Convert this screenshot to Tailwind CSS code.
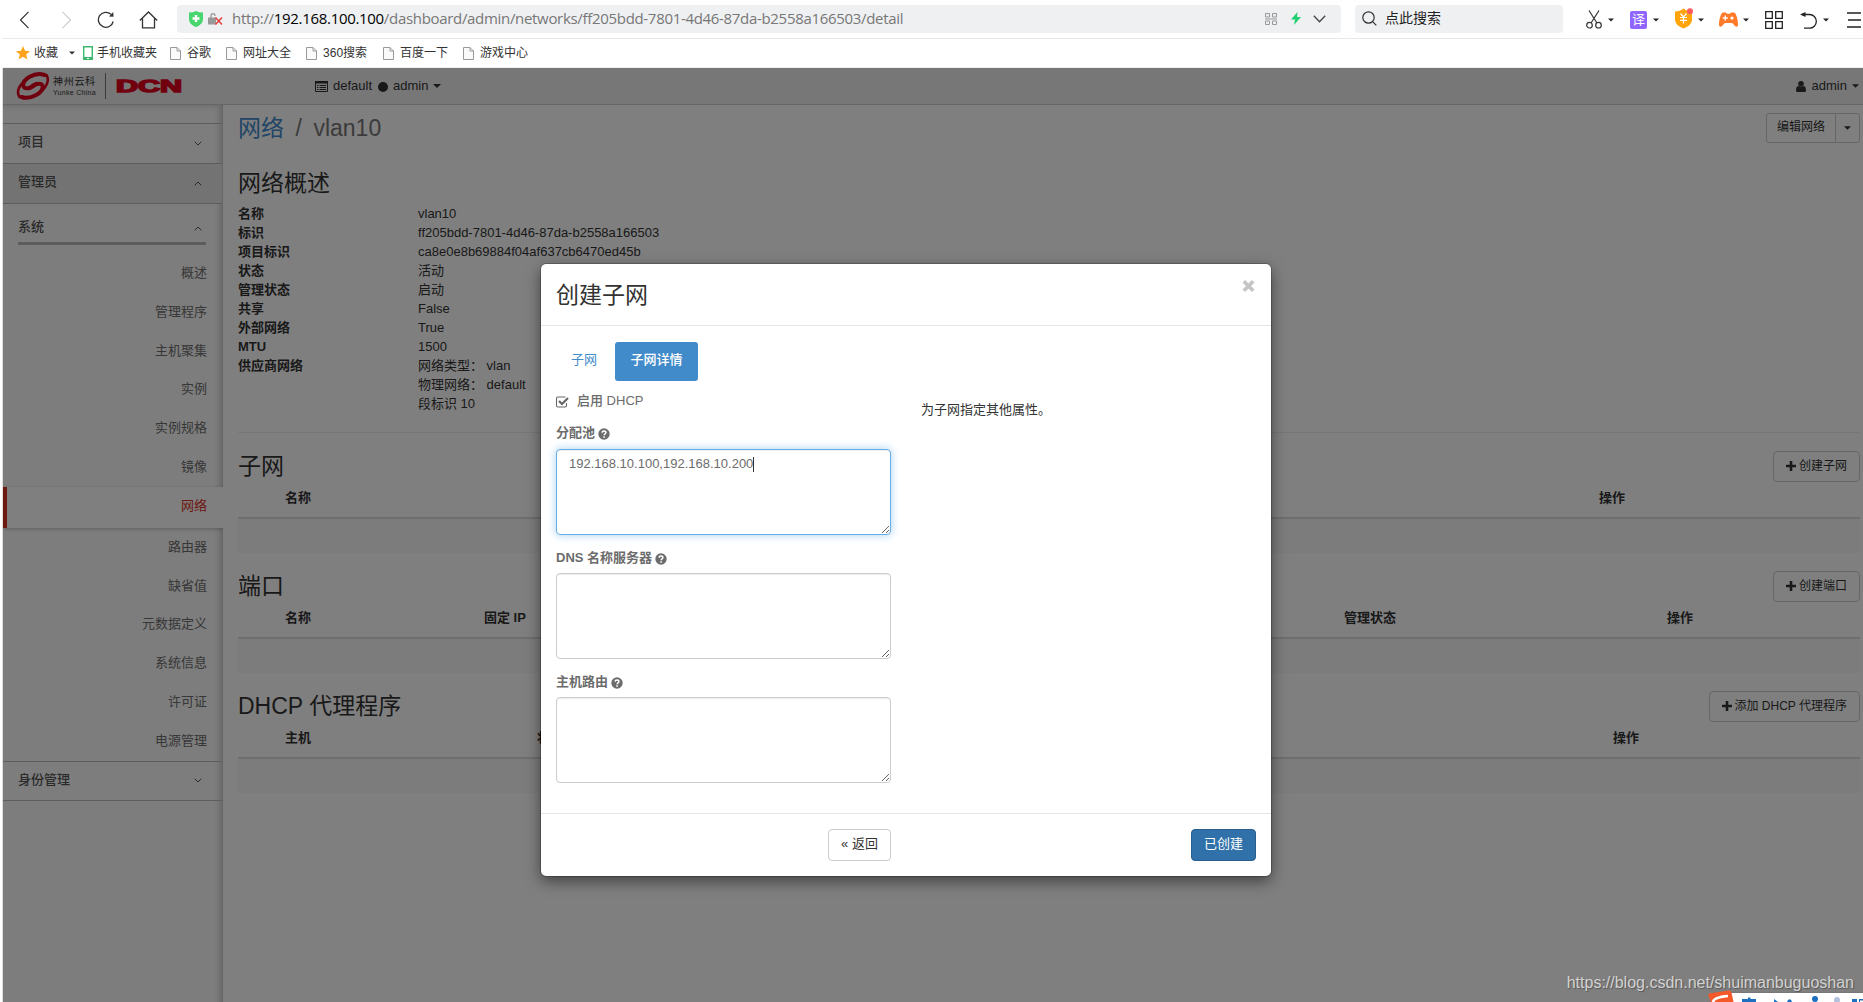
<!DOCTYPE html>
<html lang="zh-CN">

<head>
    <meta charset="UTF-8" />
    <meta name="viewport" content="width=device-width, initial-scale=1.0" />
    <title>网络 - vlan10</title>
    <script src="https://cdn.jsdelivr.net/npm/@tailwindcss/browser@4"></script>
</head>

<body class="bg-white overflow-hidden font-['Liberation_Sans','Noto_Sans_CJK_SC',sans-serif] text-[13px] text-[#333]">
    <!-- shared icons -->
    <svg class="hidden">
        <symbol id="caret" viewBox="0 0 8 4"><path d="M0 0h8L4 4z" fill="currentColor" /></symbol>
        <symbol id="file" viewBox="0 0 11 13">
            <path d="M.5.5h6.500l3.500 3.500v8.500H.5zM7 .5V4h3.500" fill="#fafafa" stroke="#999" />
        </symbol>
        <symbol id="plus" viewBox="0 0 10 10"><path d="M5 0v10M0 5h10" stroke="currentColor" stroke-width="2.600" /></symbol>
        <symbol id="down" viewBox="0 0 8 5"><path d="M.7.7 4 4 7.300.7" fill="none" stroke="currentColor" /></symbol>
        <symbol id="up" viewBox="0 0 8 5"><path d="M.7 4.300 4 1l3.300 3.300" fill="none" stroke="currentColor" /></symbol>
        <symbol id="help" viewBox="0 0 12 12">
            <circle cx="6" cy="6" r="5.700" fill="currentColor" />
            <path d="M4.200 4.700C4.200 2.400 7.900 2.500 7.900 4.600 7.900 5.900 6.100 5.800 6.100 7.200" fill="none" stroke="#fff" stroke-width="1.500" />
            <path d="M5.300 8.200h1.600v1.500H5.300z" fill="#fff" />
        </symbol>
    </svg>

    <div class="flex flex-col h-screen w-screen overflow-hidden">
        <!-- browser toolbar -->
        <div class="flex items-center h-[39px] shrink-0 border-b border-[#e9e9e9] ml-[2px] pl-[17px] pb-[6px] pt-[5px] text-[#333]">
            <svg class="w-[11px] h-[18px] mt-[3px]" viewBox="0 0 11 18" fill="none" stroke="#333" stroke-width="1.200"><path d="M9.500.8 1.500 9l8 8.200" /></svg>
            <svg class="w-[11px] h-[18px] mt-[3px] ml-[31px]" viewBox="0 0 11 18" fill="none" stroke="#ccc" stroke-width="1.200"><path d="M1.500.8l8 8.200-8 8.200" /></svg>
            <svg class="w-[18px] h-[18px] mt-[2px] ml-[25px]" viewBox="0 0 18 18" fill="none" stroke="#333" stroke-width="1.300">
                <path d="M16.200 10.500A7.500 7.500 0 1 1 14 3.300" /><path d="M12 5.500l4.500.2L16.300 1z" fill="#333" stroke="none" />
            </svg>
            <svg class="w-[19px] h-[18px] mt-[2px] ml-[24px]" viewBox="0 0 19 18" fill="none" stroke="#333" stroke-width="1.300"><path d="M.8 9.500 9.500 1l8.700 8.500M3.500 7.500v9.300h12V7.500" /></svg>

            <div class="flex items-center w-[1164px] h-7 ml-[19px] px-3 rounded bg-[#eff0f2]">
                <svg class="w-[14px] h-4" viewBox="0 0 14 16"><path d="M0 1.500Q4 1.500 7 0q3 1.500 7 1.500V8c0 4-3 6.500-7 8-4-1.500-7-4-7-8z" fill="#48d66f" /><path d="M7 4v7M3.500 7.500h7" stroke="#fff" stroke-width="2.400" /></svg>
                <svg class="w-[15px] h-[12px] ml-[5px]" viewBox="0 0 15 12"><path d="M0 4.500h8V11.500H0z" fill="#999" /><path d="M3 5V3q0-2.300 2-2.300T7 3" fill="none" stroke="#999" stroke-width="1.300" /><path d="M7.500 4.500l6.500 7m0-7-6.500 7" stroke="#e33a3a" stroke-width="1.400" /></svg>
                <div class="ml-[9px] text-[15px] whitespace-nowrap font-['Open_Sans','Noto_Sans_CJK_SC',sans-serif] text-[#777] tracking-[-0.315px]">http://<span class="text-black">192.168.100.100</span>/dashboard/admin/networks/ff205bdd-7801-4d46-87da-b2558a166503/detail</div>
                <svg class="w-[12px] h-[12px] ml-auto" viewBox="0 0 12 12" fill="none" stroke="#999"><path d="M.5.5h4v3.500h-4zM7.500.5h4v3.500h-4zM.5 8h4v3.500h-4zM7.500 8h4v3.500h-4zM0 6h12" /></svg>
                <svg class="w-[10px] h-[13px] ml-[14px]" viewBox="0 0 10 13"><path d="M6.500 0 0 7.500h4L3 13l7-8H6z" fill="#20d070" /></svg>
                <svg class="w-[13px] h-[8px] ml-[12px] mr-[3px]" viewBox="0 0 13 8" fill="none" stroke="#444" stroke-width="1.300"><path d="M.8.8l5.700 6 5.700-6" /></svg>
            </div>
            <div class="flex items-center w-[208px] h-7 ml-[14px] pl-[7px] rounded bg-[#eff0f2]">
                <svg class="w-[15px] h-[15px]" viewBox="0 0 15 15" fill="none" stroke="#333" stroke-width="1.200"><circle cx="6.500" cy="6.500" r="5.700" /><path d="M10.800 10.800l3.500 3.500" /></svg>
                <span class="ml-2 text-[14px] text-[#222]">点此搜索</span>
            </div>
            <div class="flex items-center ml-[23px] mt-[2px] text-[#222]">
                <svg class="w-4 h-[19px]" viewBox="0 0 16 19" fill="none" stroke="#333" stroke-width="1.200"><path d="M3 .5l7.800 12.300M13 .5 5.200 12.800" /><circle cx="3.500" cy="15.200" r="2.800" /><circle cx="12.500" cy="15.200" r="2.800" /></svg>
                <svg class="w-[6px] h-1 ml-[6px]"><use href="#caret" /></svg>
                <span class="ml-4 w-[17px] h-[18px] leading-[17px] rounded-[2px] bg-[#9166ff] text-center text-[13px] text-white">译</span>
                <svg class="w-[6px] h-1 ml-[6px]"><use href="#caret" /></svg>
                <svg class="w-[19px] h-[21px] ml-[16px] -mt-[3px]" viewBox="0 0 19 21"><path d="M0 3.500Q5 3.500 8.500.5 12 3.500 17 3.500V12q0 5-8.500 8.500Q0 17 0 12z" fill="#ffa50a" /><path d="M5.500 5.500 8.500 9l3-3.500M8.500 9v6.500M5 9.500h7M5 12.300h7" stroke="#fff" stroke-width="1.200" fill="none" /><circle cx="15" cy="3.200" r="3" fill="#ff5d5d" /></svg>
                <svg class="w-[6px] h-1 ml-[4px]"><use href="#caret" /></svg>
                <svg class="w-[19px] h-[15px] ml-[15px] -mt-[1px]" viewBox="0 0 19 15"><path d="M4 .5h3l1 1.200h3L12 .5h3c2 0 4 7 4 12 0 3-2.500 2.500-4 .5-1-1.500-1.500-2-3-2H7c-1.500 0-2 .5-3 2-1.500 2-4 2.500-4-.5C0 7.500 2 .5 4 .5z" fill="#ff7a2b" /><path d="M6.300 3.500v5M3.800 6h5" stroke="#fff" stroke-width="1.300" /><circle cx="13" cy="6" r="1.600" fill="#fff" /></svg>
                <svg class="w-[6px] h-1 ml-[5px]"><use href="#caret" /></svg>
                <svg class="w-[18px] h-[18px] ml-[16px]" viewBox="0 0 18 18" fill="none" stroke="#222" stroke-width="1.300"><path d="M.7.700h6.600v6.600H.7zM10.700.700h6.600v6.600h-6.600zM.7 10.700h6.600v6.600H.7zM10.700 10.700h6.600v6.600h-6.600z" /></svg>
                <svg class="w-[17px] h-[18px] ml-[17px]" viewBox="0 0 17 18" fill="none" stroke="#222" stroke-width="1.300"><path d="M2 3.500h7.500a6.700 6.700 0 0 1 0 13.700H4" /><path d="M0 3.500 5.500 1v5z" fill="#222" stroke="none" /></svg>
                <svg class="w-[6px] h-1 ml-[6px]"><use href="#caret" /></svg>
                <svg class="w-[16px] h-[16px] ml-[18px]" viewBox="0 0 16 16" stroke="#222" stroke-width="1.300"><path d="M0 1h14M1 8h13M0 15h14" /></svg>
            </div>
        </div>

        <!-- bookmarks -->
        <div class="flex items-center h-[29px] shrink-0 border-b border-[#eee] ml-[2px] pl-[14px] text-[12px]">
            <svg class="w-[14px] h-[14px]" viewBox="0 0 14 14"><path d="M7 0l2 4.800 5 .4-3.800 3.300 1.200 5L7 10.800l-4.400 2.700 1.200-5L0 5.200l5-.4z" fill="#ffa31a" /></svg>
            <span class="ml-1">收藏</span>
            <svg class="w-[6px] h-1 ml-[11px]"><use href="#caret" /></svg>
            <svg class="w-[10px] h-[14px] ml-2" viewBox="0 0 10 14"><path d="M.7.700h8.600v12.600H.7z" fill="#fff" stroke="#3cb96c" stroke-width="1.400" /><path d="M0 11h10v3H0z" fill="#3cb96c" /><path d="M4 12.500h2" stroke="#fff" /></svg>
            <span class="ml-1">手机收藏夹</span>
            <svg class="w-[11px] h-[13px] ml-[13px] mr-[6px]"><use href="#file" /></svg><span>谷歌</span>
            <svg class="w-[11px] h-[13px] ml-[15px] mr-[6px]"><use href="#file" /></svg><span>网址大全</span>
            <svg class="w-[11px] h-[13px] ml-[15px] mr-[6px]"><use href="#file" /></svg><span>360搜索</span>
            <svg class="w-[11px] h-[13px] ml-[16px] mr-[6px]"><use href="#file" /></svg><span>百度一下</span>
            <svg class="w-[11px] h-[13px] ml-[15px] mr-[6px]"><use href="#file" /></svg><span>游戏中心</span>
        </div>

        <!-- page -->
        <div class="relative flex flex-col flex-1 ml-[2px] border-l border-[#ddd] overflow-hidden">
            <div class="flex items-center h-[37px] shrink-0 border-b border-[#ccc] bg-[#eee] pl-[13px]">
                <svg class="w-[34px] h-[28px]" viewBox="0 0 34 28" fill="none" stroke="#e2001f" stroke-linecap="round">
                    <path d="M28.500 3C19-.5 5.500 7.500 7.500 14.500c1.500 3.500 9 1.500 12.500-2.500" stroke-width="4" />
                    <path d="M5.500 25c9 3 23-4.500 21-11.500-1.500-3.500-9-1.500-12.500 2.500" stroke-width="4" />
                    <path d="M30.500 3c3.500 6-.5 13.500-8 18M3.500 25C0 19.500 3 12.500 11 7.500" stroke-width="2.600" />
                    <path d="M13.500 17c2-3.500 4-5 7-5.500" stroke-width="2.500" />
                </svg>
                <div class="ml-[3px] w-[44px]">
                    <div class="text-[10px] leading-[12px] tracking-[0.700px] whitespace-nowrap">神州云科</div>
                    <div class="text-[7px] leading-[9px] tracking-[0.300px] whitespace-nowrap">Yunke China</div>
                </div>
                <div class="w-px h-[26px] ml-[8px] bg-[#777]"></div>
                <svg class="w-[68px] h-[20px] ml-[9px] overflow-visible" viewBox="0 0 68 20"><text x="1" y="16" textLength="66" lengthAdjust="spacingAndGlyphs" font-family="Liberation Sans" font-weight="bold" font-size="16" fill="#e2001f" stroke="#e2001f" stroke-width="1.400">DCN</text></svg>
                <svg class="w-[13px] h-[11px] ml-[132px]" viewBox="0 0 13 11"><path d="M.5.500h12v10H.5z" fill="none" stroke="#333" /><path d="M0 0h13v2.500H0z" fill="#333" /><path d="M2 4.500h1.500M4.500 4.500H11M2 6.500h1.500M4.500 6.500H11M2 8.500h1.500M4.500 8.500H11" stroke="#333" /></svg>
                <span class="ml-[5px]">default</span>
                <span class="w-[10px] h-[10px] ml-[6px] mt-[2px] rounded-full bg-[#333]"></span>
                <span class="ml-[5px]">admin</span>
                <svg class="w-2 h-1 ml-[5px]"><use href="#caret" /></svg>
                <svg class="w-[10px] h-[11px] ml-auto" viewBox="0 0 10 11" fill="#333"><circle cx="5" cy="2.800" r="2.800" /><path d="M0 9.500C0 6.500 1 5 2.500 5q2.500 1.600 5 0C9 5 10 6.500 10 9.500 10 11 9 11 8.500 11h-7C1 11 0 11 0 9.500z" /></svg>
                <span class="ml-[6px]">admin</span>
                <svg class="w-[7px] h-1 ml-[5px] mr-[4px]"><use href="#caret" /></svg>
            </div>

            <div class="flex flex-1 min-h-0">
                <!-- sidebar -->
                <div class="w-[220px] shrink-0 bg-[#fbfbfb] border-r border-[#ccc] shadow-[inset_-5px_3px_6px_-3px_rgba(0,0,0,0.2)] text-[#6e6e6e]">
                    <div class="flex items-center justify-between h-10 mt-[18px] pl-[15px] pr-5 pb-[3px] border-t border-[#bbb] font-medium text-[#555]">项目<svg class="w-2 h-[5px] mt-[3px]"><use href="#down" /></svg></div>
                    <div class="flex items-center justify-between h-10 pl-[15px] pr-5 pb-[3px] border-t border-[#bbb] bg-[#e6e6e6] font-medium text-[#555]">管理员<svg class="w-2 h-[5px] mt-[3px]"><use href="#up" /></svg></div>
                    <div class="border-t border-[#bbb] pl-[15px] pr-4 pt-[8px]">
                        <div class="flex items-center justify-between h-[33px] pr-1 border-b-[3px] border-[#b9b9b9] font-medium text-[#555]">系统<svg class="w-2 h-[5px] mt-[3px]"><use href="#up" /></svg></div>
                    </div>
                    <ul class="pt-[9px] text-right leading-[38.8px]">
                        <li class="pr-[15px]">概述</li>
                        <li class="pr-[15px]">管理程序</li>
                        <li class="pr-[15px]">主机聚集</li>
                        <li class="pr-[15px]">实例</li>
                        <li class="pr-[15px]">实例规格</li>
                        <li class="pr-[15px]">镜像</li>
                        <li class="relative -mr-px pr-4 h-[41px] border-l-4 border-[#d9301e] bg-white text-[#d9301e] shadow-[0_1px_4px_rgba(0,0,0,0.25)] [clip-path:inset(-5px_0_-5px_0)]">网络</li>
                        <li class="pr-[15px]">路由器</li>
                        <li class="pr-[15px]">缺省值</li>
                        <li class="pr-[15px]">元数据定义</li>
                        <li class="pr-[15px]">系统信息</li>
                        <li class="pr-[15px]">许可证</li>
                        <li class="pr-[15px]">电源管理</li>
                    </ul>
                    <div class="flex items-center justify-between h-10 pl-[15px] pr-5 pb-[2px] border-y border-[#bbb] font-medium text-[#555]">身份管理<svg class="w-2 h-[5px] mt-[2px]"><use href="#down" /></svg></div>
                </div>

                <!-- content -->
                <div class="flex-1 min-w-0 pl-[15px] pr-[3px] pt-2">
                    <div class="flex items-start justify-between h-[58px]">
                        <div class="text-[23px] leading-[31px] text-[#777]"><span class="text-[#428bca]">网络</span><span class="mx-[11.500px]">/</span>vlan10</div>
                        <div class="flex h-[30px] border border-[#ccc] rounded-[3px] text-[12px]">
                            <span class="w-[69px] leading-[26px] pl-[10px] border-r border-[#ccc]">编辑网络</span>
                            <span class="w-[23px] flex items-center justify-center"><svg class="w-[7px] h-1"><use href="#caret" /></svg></span>
                        </div>
                    </div>
                    <h4 class="text-[23px] leading-[25px]">网络概述</h4>
                    <dl class="grid grid-cols-[180px_1fr] mt-[8px] leading-[19px]">
                        <dt class="font-bold">名称</dt><dd>vlan10</dd>
                        <dt class="font-bold">标识</dt><dd>ff205bdd-7801-4d46-87da-b2558a166503</dd>
                        <dt class="font-bold">项目标识</dt><dd>ca8e0e8b69884f04af637cb6470ed45b</dd>
                        <dt class="font-bold">状态</dt><dd>活动</dd>
                        <dt class="font-bold">管理状态</dt><dd>启动</dd>
                        <dt class="font-bold">共享</dt><dd>False</dd>
                        <dt class="font-bold">外部网络</dt><dd>True</dd>
                        <dt class="font-bold">MTU</dt><dd>1500</dd>
                        <dt class="font-bold">供应商网络</dt><dd>网络类型： vlan<br />物理网络： default<br />段标识 10</dd>
                    </dl>
                    <hr class="mt-[19px] border-[#eee]" />

                    <div class="h-[120px] pt-[18px]">
                        <div class="flex justify-between h-[31px]">
                            <h4 class="text-[23px] leading-[31px]">子网</h4>
                            <span class="flex items-center h-[31px] px-[12px] pb-[2px] border border-[#ccc] rounded-[4px] text-[12px]"><svg class="w-[10px] h-[10px] mr-[3px]"><use href="#plus" /></svg>创建子网</span>
                        </div>
                        <div class="grid grid-cols-[1314px_1fr] h-[37px] pl-[47px] pt-[6px] border-b-2 border-[#ddd] font-bold"><span>名称</span><span>操作</span></div>
                        <div class="h-[34px] bg-[#f9f9f9]"></div>
                    </div>
                    <div class="h-[120px] pt-[18px]">
                        <div class="flex justify-between h-[31px]">
                            <h4 class="text-[23px] leading-[31px]">端口</h4>
                            <span class="flex items-center h-[31px] px-[12px] pb-[2px] border border-[#ccc] rounded-[4px] text-[12px]"><svg class="w-[10px] h-[10px] mr-[3px]"><use href="#plus" /></svg>创建端口</span>
                        </div>
                        <div class="grid grid-cols-[199px_860px_323px_1fr] h-[37px] pl-[47px] pt-[6px] border-b-2 border-[#ddd] font-bold"><span>名称</span><span>固定 IP</span><span>管理状态</span><span>操作</span></div>
                        <div class="h-[34px] bg-[#f9f9f9]"></div>
                    </div>
                    <div class="h-[120px] pt-[18px]">
                        <div class="flex justify-between h-[31px]">
                            <h4 class="text-[23px] leading-[31px]">DHCP 代理程序</h4>
                            <span class="flex items-center h-[31px] px-[12px] pb-[2px] border border-[#ccc] rounded-[4px] text-[12px]"><svg class="w-[10px] h-[10px] mr-[3px]"><use href="#plus" /></svg>添加 DHCP 代理程序</span>
                        </div>
                        <div class="grid grid-cols-[252px_1076px_1fr] h-[37px] pl-[47px] pt-[6px] border-b-2 border-[#ddd] font-bold"><span>主机</span><span>状态</span><span>操作</span></div>
                        <div class="h-[34px] bg-[#f9f9f9]"></div>
                    </div>
                </div>
            </div>

            <!-- backdrop + modal -->
            <div class="absolute inset-0 bg-black/50">
                <div class="flex flex-col w-[730px] h-[612px] mt-[196px] ml-[538px] rounded-[5px] bg-white shadow-[0_5px_15px_rgba(0,0,0,0.5)] outline outline-black/20">
                    <div class="flex justify-between h-[62px] px-[15px] border-b border-[#e5e5e5]">
                        <h3 class="text-[23px] leading-[62px]">创建子网</h3>
                        <svg class="w-[13px] h-[12px] mt-[16px] mr-px" viewBox="0 0 13 12"><path d="M1.800 1.300l9.400 9.400m0-9.400-9.400 9.400" stroke="#c4c4c4" stroke-width="3.600" /></svg>
                    </div>
                    <div class="flex-1 px-[15px] pt-4">
                        <div class="flex gap-[2px] leading-[36px] text-[#428bca]">
                            <span class="pl-[15px] w-[57px] h-[39px] whitespace-nowrap">子网</span>
                            <span class="w-[83px] h-[39px] rounded-[3px] bg-[#428bca] text-center font-medium text-white">子网详情</span>
                        </div>
                        <div class="flex text-[#6c6c6c]">
                            <div class="w-[335px]">
                                <label class="flex items-center h-10 font-medium">
                                    <svg class="w-[13px] h-3 mr-2 mt-[2px]" viewBox="0 0 13 12" fill="none" stroke="#666"><path d="M10.500 7v2.500a1.500 1.500 0 0 1-1.500 1.500H2A1.500 1.500 0 0 1 .5 9.500v-7A1.500 1.500 0 0 1 2 1h7.500" stroke-width="1.100" /><path d="M3 5l3 3L12 2" stroke-width="2.200" /></svg>启用 DHCP</label>
                                <label class="flex items-center gap-[3px] h-[28px] pb-[4px] font-bold">分配池<svg class="w-3 h-3 mt-[2px]"><use href="#help" /></svg></label>
                                <div class="relative h-[86px]">
                                    <textarea class="block w-full h-full px-3 py-[4px] leading-[19px] border border-[#66afe9] rounded-[4px] bg-white outline-none shadow-[inset_0_1px_1px_rgba(0,0,0,0.075),0_0_8px_rgba(102,175,233,0.6)]">192.168.10.100,192.168.10.200</textarea>
                                    <span class="absolute left-[197px] top-[8px] w-px h-[15px] bg-[#333]"></span>
                                </div>
                                <label class="flex items-center gap-[3px] h-[38px] pt-[7px] font-bold">DNS 名称服务器<svg class="w-3 h-3 mt-[2px]"><use href="#help" /></svg></label>
                                <textarea class="block w-full h-[86px] border border-[#ccc] rounded-[4px] bg-white shadow-[inset_0_1px_1px_rgba(0,0,0,0.075)]"></textarea>
                                <label class="flex items-center gap-[3px] h-[38px] pt-[7px] font-bold">主机路由<svg class="w-3 h-3 mt-[2px]"><use href="#help" /></svg></label>
                                <textarea class="block w-full h-[86px] border border-[#ccc] rounded-[4px] bg-white shadow-[inset_0_1px_1px_rgba(0,0,0,0.075)]"></textarea>
                            </div>
                            <p class="ml-[30px] mt-[19px] leading-[19px] text-[#333]">为子网指定其他属性。</p>
                        </div>
                    </div>
                    <div class="flex justify-between h-[63px] pt-[15px] pl-[287px] pr-[15px] border-t border-[#e5e5e5] leading-[27px] text-center">
                        <span class="w-[63px] h-8 border border-[#ccc] rounded-[4px]">« 返回</span>
                        <span class="w-[65px] h-8 border border-[#285e8e] rounded-[4px] bg-[#3071a9] text-white">已创建</span>
                    </div>
                </div>
            </div>

            <div class="absolute right-[9px] bottom-[9px] leading-5 text-[16px] text-[#d2d2d2] [text-shadow:1px_1px_1px_#555]">https://blog.csdn.net/shuimanbuguoshan</div>
            <!-- input method bar, cut off by the window edge -->
            <svg class="absolute right-0 bottom-0 w-[156px] h-[12px]" viewBox="0 0 156 12">
                <path d="M16 3h140v9H16z" fill="#fff" /><path d="M16 2.500h140" stroke="#777" />
                <path d="M2 3.500 22 .5q2 0 2.500 2l2 9.500H4L1.500 6Q1 4 2 3.500z" fill="#f4592a" />
                <path d="M6 12q1-5 15-6" fill="none" stroke="#fff" stroke-width="2.600" />
                <g fill="#1f6fc0"><path d="M35 9h14v3H35zM41 7.500h2.500V10H41zM67 9l4 3h-4zM81 10q3-2 4 2h-5z" /><circle cx="108" cy="9" r="3" /><circle cx="130" cy="10" r="3" fill="#b4c0dc" /><path d="M145 9h5v3h-5zM152 9h4v1.500h-3v1.500h-1z" /></g>
            </svg>
        </div>
    </div>
</body>

</html>
